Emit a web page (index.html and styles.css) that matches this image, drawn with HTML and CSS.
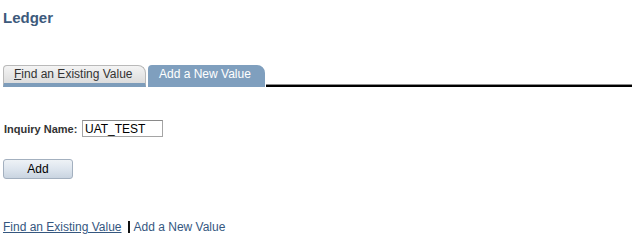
FILE: index.html
```html
<!DOCTYPE html>
<html lang="en">
<head>
    <meta charset="UTF-8">
    <title>Ledger</title>
    <link rel="stylesheet" href="styles.css">
</head>
<body>
    <div class="page">
        <h1 class="page-title">Ledger</h1>

        <div class="tabs">
            <div class="tab inactive"><span class="key">F</span>ind an Existing Value</div>
            <div class="tab active">Add a New Value</div>
            <div class="tab-line"></div>
        </div>

        <div class="field-row">
            <label class="field-label" for="inquiry">Inquiry Name:</label>
            <input class="field-input" id="inquiry" type="text" value="UAT_TEST">
        </div>

        <button class="btn-add" type="button">Add</button>

        <div class="footer-links">
            <a href="#" class="link">Find an Existing Value</a>
            <span class="sep"></span>
            <span class="current">Add a New Value</span>
        </div>
    </div>
</body>
</html>
```

FILE: styles.css
```css
* {
    margin: 0;
    padding: 0;
    box-sizing: border-box;
}

body {
    font-family: "Liberation Sans", Arial, sans-serif;
    font-size: 12px;
    color: #000;
    background: #fff;
}

.page {
    padding: 0 3px;
}

.page-title {
    font-size: 15px;
    font-weight: bold;
    line-height: 18px;
    color: #3d5a7c;
    margin-top: 9px;
}

.tabs {
    display: flex;
    align-items: flex-end;
    margin-top: 38px;
    height: 22px;
}

.tab {
    height: 22px;
    line-height: 18px;
    font-size: 12px;
    white-space: nowrap;
    border-radius: 4px 8px 0 0;
}

.tab.inactive {
    width: 143px;
    padding-left: 10px;
    color: #333;
    background: linear-gradient(#f4f4f4, #dcdcdc);
    border: 1px solid #b9b9b9;
    border-bottom: 4px solid #7d9cba;
    line-height: 17px;
}

.tab .key {
    text-decoration: underline;
}

.tab.active {
    width: 117px;
    margin-left: 2px;
    padding-left: 11px;
    color: #fff;
    background: #7f9fbe;
}

.tab-line {
    flex: 1;
    height: 3px;
    margin-left: 1px;
    margin-right: 1px;
    border-top: 1px solid #8c8c8c;
    background: #000;
}

.field-row {
    display: flex;
    align-items: center;
    margin-top: 33px;
}

.field-label {
    font-size: 11px;
    font-weight: bold;
    color: #333;
    padding-left: 1px;
    width: 79px;
}

.field-input {
    width: 81px;
    height: 17px;
    font-family: "Liberation Sans", Arial, sans-serif;
    font-size: 12px;
    padding: 0 2px;
    border: 1px solid #a5a5a5;
    border-top-color: #8a8a8a;
    color: #000;
    outline: none;
}

.btn-add {
    display: block;
    width: 70px;
    height: 20px;
    margin-top: 22px;
    font-family: "Liberation Sans", Arial, sans-serif;
    font-size: 12px;
    color: #000;
    background: linear-gradient(#eef2f6 0%, #dde5ee 50%, #c9d4e0 100%);
    border: 1px solid #a3b0bf;
    border-radius: 3px;
}

.footer-links {
    display: flex;
    align-items: center;
    margin-top: 41px;
    line-height: 14px;
    font-size: 12px;
}

.link {
    color: #35577f;
    text-decoration: underline;
}

.sep {
    width: 2px;
    height: 12px;
    margin: 0 4px 0 6px;
    background: #111;
}

.current {
    color: #35577f;
}
```
